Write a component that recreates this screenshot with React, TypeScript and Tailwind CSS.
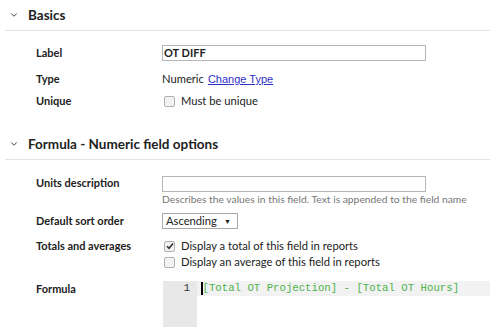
import { ChevronDown } from 'lucide-react'

function SectionHeader({ title }: { title: string }) {
  return (
    <div className="pl-[5px]">
      <div className="flex items-center h-[31px] pl-[4px] border-b border-[#e3e3e3]">
        <ChevronDown size={10} strokeWidth={2.2} className="text-[#333] mr-[9px]" />
        <span className="text-[13.5px] font-bold text-[#222]">{title}</span>
      </div>
    </div>
  )
}

function Row({ label, children, className = '' }: { label: string; children: React.ReactNode; className?: string }) {
  return (
    <div className={`flex ${className}`}>
      <div className="w-[126px] shrink-0 text-[11px] font-bold text-[#222] leading-[16px]">{label}</div>
      <div className="flex-1 text-[11.2px] text-[#222] leading-[16px]">{children}</div>
    </div>
  )
}

function Check({ checked, label }: { checked?: boolean; label: string }) {
  return (
    <label className="flex items-center gap-[6px]">
      <span className="w-[11px] h-[11px] ml-[2px] rounded-[2px] border border-[#b0b0b0] bg-[#f2f2f2] flex items-center justify-center">
        {checked && (
          <svg width="8" height="8" viewBox="0 0 8 8">
            <path d="M1 4.2 L3 6.2 L7 1.5" fill="none" stroke="#333" strokeWidth="1.6" />
          </svg>
        )}
      </span>
      <span>{label}</span>
    </label>
  )
}

export default function App() {
  return (
    <div className="w-[490px] h-[327px] overflow-hidden bg-white" style={{ fontFamily: 'Lato, "Open Sans", sans-serif' }}>
      <SectionHeader title="Basics" />

      <div className="pl-[36px] pt-[14px]">
        <Row label="Label" className="items-center">
          <input
            readOnly
            value="OT DIFF"
            className="w-[264px] h-[16px] border border-[#b5b5b5] px-[1px] text-[11px] font-bold text-[#222] outline-none"
          />
        </Row>
        <Row label="Type" className="mt-[10px]">
          <span>Numeric</span>
          <a className="ml-[4px] text-[#3030c8] underline text-[11px]" style={{ fontFamily: '"Liberation Sans", Arial, sans-serif' }}>
            Change Type
          </a>
        </Row>
        <Row label="Unique" className="mt-[6px]">
          <Check label="Must be unique" />
        </Row>
      </div>

      <div className="mt-[20px]">
        <SectionHeader title="Formula - Numeric field options" />
      </div>

      <div className="pl-[36px] pt-[15px]">
        <Row label="Units description">
          <input readOnly className="w-[264px] h-[16px] border border-[#b5b5b5] outline-none block mt-[1px]" />
          <div className="text-[10.3px] text-[#777] leading-[14px]">
            Describes the values in this field. Text is appended to the field name
          </div>
        </Row>
        <Row label="Default sort order" className="mt-[7px] items-center">
          <div className="w-[76px] h-[16px] border border-[#a9a9a9] flex items-center justify-between pl-[3px] pr-[6px]">
            <span>Ascending</span>
            <span className="text-[7px] text-[#222]">▼</span>
          </div>
        </Row>
        <Row label="Totals and averages" className="mt-[9px]">
          <Check checked label="Display a total of this field in reports" />
          <Check label="Display an average of this field in reports" />
        </Row>
        <Row label="Formula" className="mt-[11px]">
          <div className="flex h-[60px] ml-[1px]">
            <div className="w-[34px] bg-[#e8e8e8] text-right pr-[7px] text-[11px] text-[#333] leading-[15px]" style={{ fontFamily: '"Liberation Mono", monospace' }}>
              1
            </div>
            <div className="flex-1 flex flex-col">
              <div className="h-[15px] bg-[#f2f2f2] flex items-center pl-[4px]">
                <span className="w-[1.5px] h-[13px] bg-black" />
                <span className="text-[10.7px] leading-[15px] text-[#4db34d] whitespace-pre" style={{ fontFamily: '"Liberation Mono", monospace' }}>
                  [Total OT Projection] - [Total OT Hours]
                </span>
              </div>
            </div>
          </div>
        </Row>
      </div>
    </div>
  )
}
